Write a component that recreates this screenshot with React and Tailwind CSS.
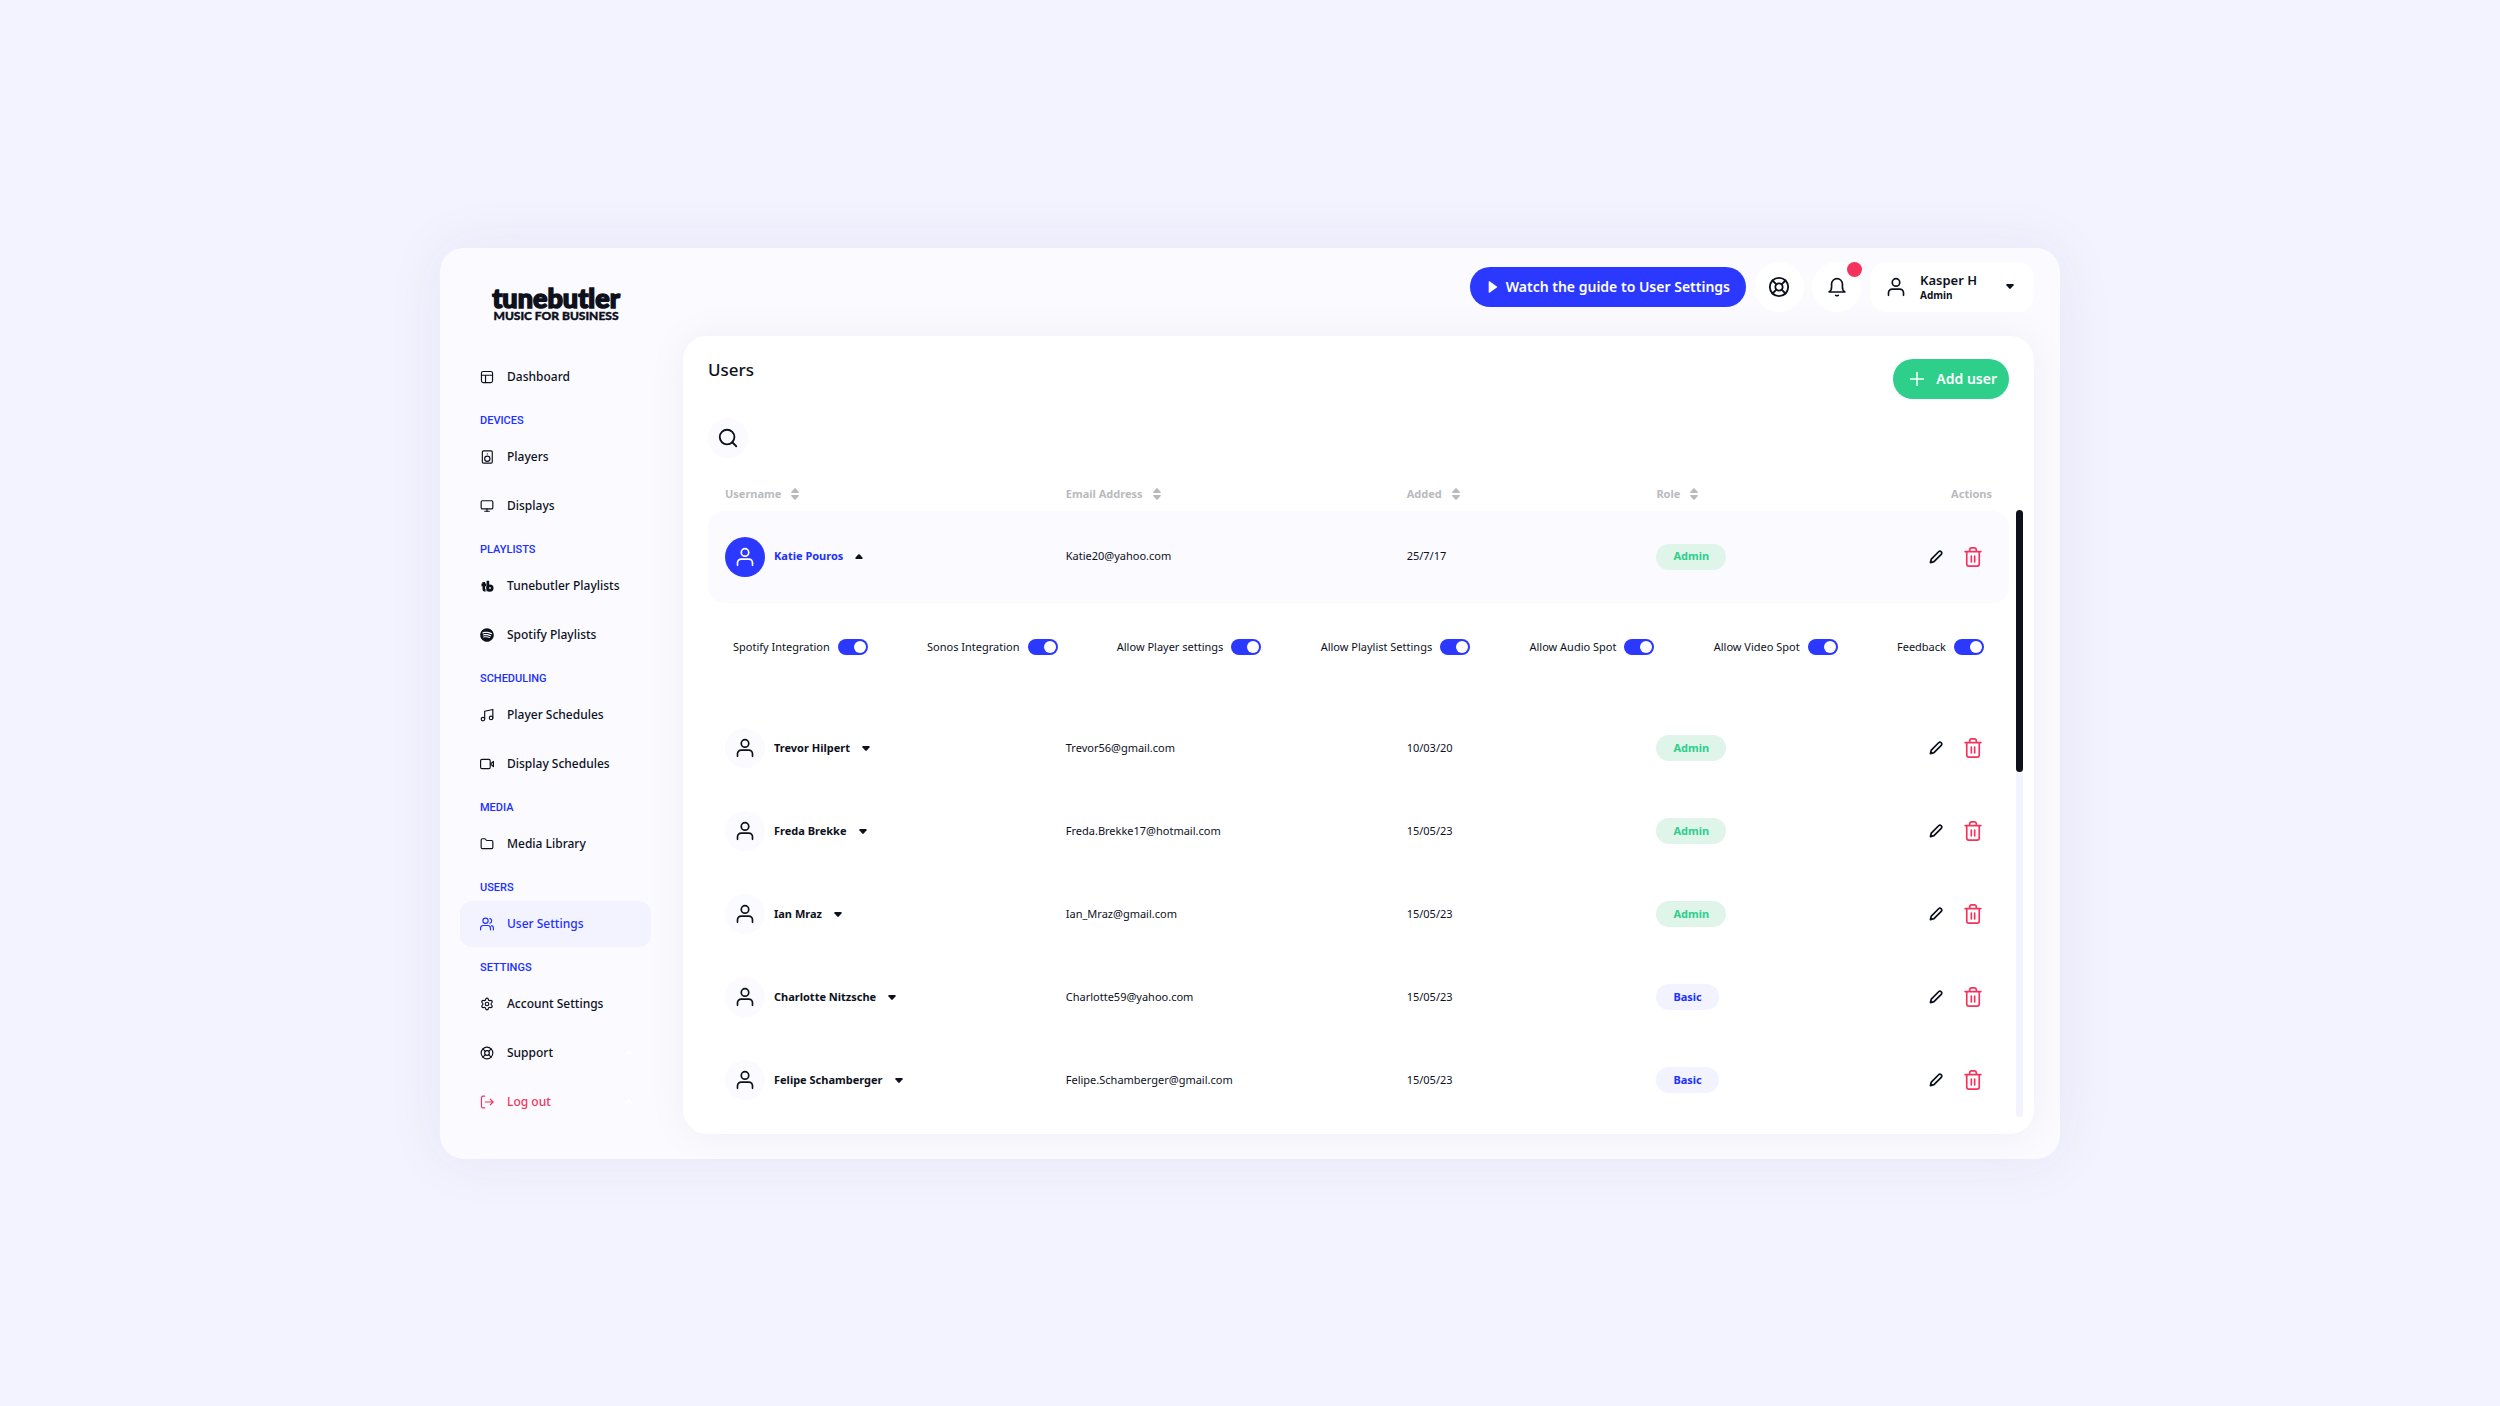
import { Fragment } from "react";
import { clsx } from "clsx";
import { ChevronUp, Folder, LifeBuoy, Monitor, Search, Settings } from "lucide-react";
import { FaSpotify } from "react-icons/fa";

const sections = [
    { items: [{ label: "Dashboard", icon: DashboardIcon }] },
    { title: "Devices", items: [{ label: "Players", icon: SpeakerIcon }, { label: "Displays", icon: Monitor }] },
    { title: "Playlists", items: [{ label: "Tunebutler Playlists", icon: TbIcon }, { label: "Spotify Playlists", icon: SpotifyIcon }] },
    { title: "Scheduling", items: [{ label: "Player Schedules", icon: NotesIcon }, { label: "Display Schedules", icon: CameraIcon }] },
    { title: "Media", items: [{ label: "Media Library", icon: Folder }] },
    { title: "Users", items: [{ label: "User Settings", icon: UsersIcon, active: true }] },
    {
        title: "Settings",
        items: [
            { label: "Account Settings", icon: Settings },
            { label: "Support", icon: LifeBuoy, expandable: true },
            { label: "Log out", icon: ExitIcon, danger: true, expandable: true },
        ],
    },
];

const users = [
    { name: "Katie Pouros", email: "Katie20@yahoo.com", added: "25/7/17", role: "Admin", open: true },
    { name: "Trevor Hilpert", email: "Trevor56@gmail.com", added: "10/03/20", role: "Admin" },
    { name: "Freda Brekke", email: "Freda.Brekke17@hotmail.com", added: "15/05/23", role: "Admin" },
    { name: "Ian Mraz", email: "Ian_Mraz@gmail.com", added: "15/05/23", role: "Admin" },
    { name: "Charlotte Nitzsche", email: "Charlotte59@yahoo.com", added: "15/05/23", role: "Basic" },
    { name: "Felipe Schamberger", email: "Felipe.Schamberger@gmail.com", added: "15/05/23", role: "Basic" },
];

const permissions = [
    "Spotify Integration",
    "Sonos Integration",
    "Allow Player settings",
    "Allow Playlist Settings",
    "Allow Audio Spot",
    "Allow Video Spot",
    "Feedback",
];

function Icon({ children, strokeWidth = 2, ...props }) {
    return (
        <svg viewBox="0 0 24 24" fill="none" stroke="currentColor" strokeWidth={strokeWidth} strokeLinecap="round" strokeLinejoin="round" aria-hidden="true" {...props}>
            {children}
        </svg>
    );
}

function DashboardIcon(props) {
    return (
        <Icon {...props}>
            <rect x="2.5" y="2.5" width="19" height="19" rx="3" />
            <path d="M2.5 9h19M9.500 9v12.500" />
        </Icon>
    );
}

function SpeakerIcon(props) {
    return (
        <Icon {...props}>
            <rect x="4" y="1.5" width="17" height="21" rx="2" />
            <circle cx="12.5" cy="15" r="4.5" />
            <path d="M12.5 6.500v.2" />
        </Icon>
    );
}

function TbIcon(props) {
    return (
        <Icon {...props} strokeWidth={4.5} strokeLinecap="butt">
            <path d="M6.500 5v12q0 2.500 3 2.500M2.500 10h8M13.500 3v18" />
            <circle cx="17" cy="15.500" r="4" />
        </Icon>
    );
}

function SpotifyIcon({ className }) {
    return <FaSpotify className={className} />;
}

function NotesIcon(props) {
    return (
        <Icon {...props}>
            <circle cx="5" cy="19" r="3" />
            <circle cx="19" cy="17" r="3" />
            <path d="M8 19V5.500l14-3V17" />
        </Icon>
    );
}

function CameraIcon(props) {
    return (
        <Icon {...props}>
            <rect x="1" y="4" width="16.500" height="16" rx="2.500" />
            <path d="m18 12 5-4.500v9z" />
        </Icon>
    );
}

function UserIcon(props) {
    return (
        <Icon {...props}>
            <circle cx="12" cy="6.500" r="4.500" />
            <path d="M3 22v-3a4.500 4.500 0 0 1 4.500-4.500h9A4.500 4.500 0 0 1 21 19v3" />
        </Icon>
    );
}

function UsersIcon(props) {
    return (
        <Icon {...props}>
            <circle cx="9.500" cy="6.500" r="4.500" />
            <path d="M1 22v-3a4.500 4.500 0 0 1 4.500-4.500h8A4.500 4.500 0 0 1 18 19v3M17 2.300a4.500 4.500 0 0 1 0 8.500M20 14.800a4.500 4.500 0 0 1 3 4.200v3" />
        </Icon>
    );
}

function ExitIcon(props) {
    return (
        <Icon {...props}>
            <path d="M8 2H5a2.500 2.500 0 0 0-2.500 2.500v15A2.500 2.500 0 0 0 5 22h3M9 12h13M17.500 7l5 5-5 5" />
        </Icon>
    );
}

function BellIcon(props) {
    return (
        <Icon {...props}>
            <path d="M2.500 18h19c-2-1-3-3-3-6V8.500a6.500 6.500 0 0 0-13 0V12c0 3-1 5-3 6zM10.500 22q1.500 1 3 0" />
        </Icon>
    );
}

function PencilIcon(props) {
    return (
        <Icon {...props} strokeWidth={3}>
            <path d="M2.500 21.500 4 15.500 16.500 3a3 3 0 0 1 4.500 4.500L8.500 20z" />
        </Icon>
    );
}

function TrashIcon(props) {
    return (
        <Icon {...props}>
            <path d="M2.500 5.500h19M4.500 5.500V20.500a2.500 2.500 0 0 0 2.500 2.500h10a2.500 2.500 0 0 0 2.500-2.500V5.500M8 5.500V3.500A2.500 2.500 0 0 1 10.500 1h3A2.500 2.500 0 0 1 16 3.500v2M10 11v7M14 11v7" />
        </Icon>
    );
}

function Caret({ up, className }) {
    return (
        <svg viewBox="0 0 10 6" fill="currentColor" className={clsx("h-[5px] w-2", className)} aria-hidden="true">
            <path d={up ? "M4 .500Q5-.300 6 .500L9.500 4.500Q10 6 8.500 6h-7Q0 6 .500 4.500z" : "M4 5.500Q5 6.300 6 5.500L9.500 1.500Q10 0 8.500 0h-7Q0 0 .500 1.500z"} />
        </svg>
    );
}

function Logo() {
    return (
        <svg viewBox="0 0 140 50" className="h-[50px] w-[140px] text-[#0d111c]" role="img" aria-label="tunebutler music for business">
            <text x="70" y="34" textAnchor="middle" fontFamily="Lato, sans-serif" fontWeight="900" fontSize="27" fill="currentColor" stroke="currentColor" strokeWidth="1.500">
                tunebutler
            </text>
            <text x="70" y="46" textAnchor="middle" fontFamily="Lato, sans-serif" fontWeight="900" fontSize="12" fill="currentColor" stroke="currentColor" strokeWidth=".400">
                MUSIC FOR BUSINESS
            </text>
        </svg>
    );
}

function NavItem({ item }) {
    const ItemIcon = item.icon;
    return (
        <a
            href="#"
            className={clsx(
                "flex h-[46px] items-center gap-[13px] rounded-xl pr-4 pl-5 text-xs font-medium",
                item.active && "bg-[#f2f3ff] text-[#2030ff]",
                item.danger && "text-[#f5325b]"
            )}
        >
            <ItemIcon className="size-[14px]" strokeWidth={2} />
            {item.label}
            {item.expandable && <ChevronUp className="ml-auto size-3 text-white" strokeWidth={3} />}
        </a>
    );
}

function Sidebar() {
    return (
        <aside className="w-[243px] shrink-0 pt-[26px] pr-8 pl-5">
            <div className="pl-[26px]">
                <Logo />
            </div>
            <nav className="mt-[30px] flex flex-col gap-[3px]">
                {sections.map((section) => (
                    <div key={section.items[0].label} className="flex flex-col gap-[3px]">
                        {section.title && (
                            <h2 className="h-7 pt-2 pl-5 font-[Roboto,sans-serif] text-[11px] leading-5 font-medium text-[#2030ff] uppercase">{section.title}</h2>
                        )}
                        {section.items.map((item) => (
                            <NavItem key={item.label} item={item} />
                        ))}
                    </div>
                ))}
            </nav>
        </aside>
    );
}

function TopBar() {
    return (
        <header className="flex items-center justify-end gap-2 pt-[14px]">
            <button className="flex h-10 items-center gap-2 rounded-full bg-[#2b38ff] pr-4 pl-[18px] text-sm font-semibold text-white">
                <svg viewBox="0 0 10 14" className="h-3 w-[10px]" fill="currentColor" aria-hidden="true">
                    <path d="M0 1Q0-.200 1 .300L9.500 6.300Q10.200 7 9.500 7.700L1 13.700Q0 14.200 0 13z" />
                </svg>
                Watch the guide to User Settings
            </button>
            <button className="flex size-[50px] items-center justify-center rounded-full bg-white" aria-label="Help">
                <LifeBuoy className="size-[22px]" strokeWidth={2} />
            </button>
            <button className="relative flex size-[50px] items-center justify-center rounded-full bg-white" aria-label="Notifications">
                <BellIcon className="size-5" />
                <span className="absolute top-0 right-0 size-[15px] rounded-full bg-[#f5325b]" />
            </button>
            <button className="flex h-[50px] w-[164px] items-center rounded-2xl bg-white pr-5 pl-4 text-left">
                <UserIcon className="size-5" />
                <span className="ml-[14px] flex-1">
                    <span className="block text-[13px] leading-4 font-semibold">Kasper H</span>
                    <span className="block text-[10px] leading-[14px] font-bold">Admin</span>
                </span>
                <Caret />
            </button>
        </header>
    );
}

function HeaderCell({ children, className }) {
    return (
        <th scope="col" className={clsx("p-0 text-left font-bold", className)}>
            <button className="flex items-center gap-[10px]">
                {children}
                <svg viewBox="0 0 8 12" className="h-3 w-2" fill="currentColor" aria-hidden="true">
                    <path d="M3.300.400Q4-.200 4.700.400L7.800 4Q8.200 5 7.300 5H.700Q-.200 5 .200 4zM3.300 11.600Q4 12.200 4.700 11.600L7.800 8Q8.200 7 7.300 7H.700Q-.200 7 .200 8z" />
                </svg>
            </button>
        </th>
    );
}

function UserRow({ user }) {
    return (
        <tr className={clsx(user.open ? "h-[92px] bg-[#fbfaff]" : "h-[83px]")}>
            <td className="rounded-l-2xl p-0 pl-[17px]">
                <button className="flex items-center gap-[9px] font-bold" aria-expanded={!!user.open}>
                    <span className={clsx("flex size-10 items-center justify-center rounded-full", user.open ? "bg-[#2b38ff] text-white" : "bg-[#fbfaff]")}>
                        <UserIcon className="size-5" />
                    </span>
                    <span className={clsx(user.open && "text-[#2030ff]")}>{user.name}</span>
                    <Caret up={user.open} className="ml-[3px]" />
                </button>
            </td>
            <td className="p-0">{user.email}</td>
            <td className="p-0">{user.added}</td>
            <td className="p-0">
                <span
                    className={clsx(
                        "inline-flex h-[26px] items-center rounded-full px-[17px] font-bold",
                        user.role === "Admin" ? "bg-[#dff5ea] text-[#2dcf8a]" : "bg-[#f2f3ff] text-[#2030ff]"
                    )}
                >
                    {user.role}
                </span>
            </td>
            <td className="rounded-r-2xl p-0 pr-[26px]">
                <div className="flex items-center justify-end gap-5">
                    <button aria-label={`Edit ${user.name}`}>
                        <PencilIcon className="size-[14px]" />
                    </button>
                    <button className="text-[#f5325b]" aria-label={`Delete ${user.name}`}>
                        <TrashIcon className="size-5" />
                    </button>
                </div>
            </td>
        </tr>
    );
}

function PermissionRow() {
    return (
        <tr className="h-[104px]">
            <td colSpan={5} className="p-0 px-[25px] pb-[15px]">
                <div className="flex justify-between">
                    {permissions.map((name) => (
                        <label key={name} className="flex items-center gap-2">
                            {name}
                            <input
                                type="checkbox"
                                role="switch"
                                defaultChecked
                                className="h-4 w-[30px] appearance-none rounded-full bg-slate-300 p-[2px] before:block before:size-3 before:rounded-full before:bg-white checked:bg-[#2b38ff] checked:before:ml-auto"
                            />
                        </label>
                    ))}
                </div>
            </td>
        </tr>
    );
}

function UsersPanel() {
    return (
        <main className="mt-6 rounded-3xl bg-white pr-[11px] pb-3 pl-[25px] shadow-[0_0_40px_rgba(20,20,60,0.05)]">
            <div className="flex items-start justify-between pt-[23px] pr-[14px]">
                <h1 className="text-[17px] leading-[22px] font-medium">Users</h1>
                <button className="flex h-10 items-center gap-3 rounded-full bg-[#2dcf8a] pr-3 pl-[17px] text-sm font-semibold text-white">
                    <svg viewBox="0 0 14 14" className="size-[14px]" fill="none" stroke="currentColor" strokeWidth="1.500" strokeLinecap="round" aria-hidden="true">
                        <path d="M7 .500v13M.500 7h13" />
                    </svg>
                    Add user
                </button>
            </div>
            <button className="mt-[19px] flex size-10 items-center justify-center rounded-full bg-[#fbfaff]" aria-label="Search">
                <Search className="size-[22px]" strokeWidth={2} />
            </button>
            <div className="mt-7 flex">
                <table className="flex-1 table-fixed border-separate border-spacing-0 text-[11px]">
                    <colgroup>
                        <col className="w-[27.500%]" />
                        <col className="w-[26.200%]" />
                        <col className="w-[19.200%]" />
                        <col className="w-[13%]" />
                        <col />
                    </colgroup>
                    <thead className="text-[#b9babd]">
                        <tr className="h-[25px] align-top">
                            <HeaderCell className="pl-[17px]">Username</HeaderCell>
                            <HeaderCell>Email Address</HeaderCell>
                            <HeaderCell>Added</HeaderCell>
                            <HeaderCell>Role</HeaderCell>
                            <th scope="col" className="p-0 pr-[17px] text-right font-bold">
                                Actions
                            </th>
                        </tr>
                    </thead>
                    <tbody>
                        {users.map((user) => (
                            <Fragment key={user.name}>
                                <UserRow user={user} />
                                {user.open && <PermissionRow />}
                            </Fragment>
                        ))}
                    </tbody>
                </table>
                <div className="mt-6 mb-[5px] ml-[7px] w-[7px] rounded-full bg-[#f2f3ff]">
                    <div className="h-[43.300%] rounded-full bg-[#0d111c]" />
                </div>
            </div>
        </main>
    );
}

export default function App() {
    return (
        <div className="flex min-h-screen items-center justify-center bg-[#f3f3ff] font-['Noto_Sans',sans-serif] text-[#0d111c]">
            <div className="flex w-[64.800%] rounded-3xl bg-[#fbfaff] pb-[25px] shadow-[0_0_60px_rgba(40,40,120,0.07)]">
                <Sidebar />
                <div className="min-w-0 flex-1 pr-[26px]">
                    <TopBar />
                    <UsersPanel />
                </div>
            </div>
        </div>
    );
}
